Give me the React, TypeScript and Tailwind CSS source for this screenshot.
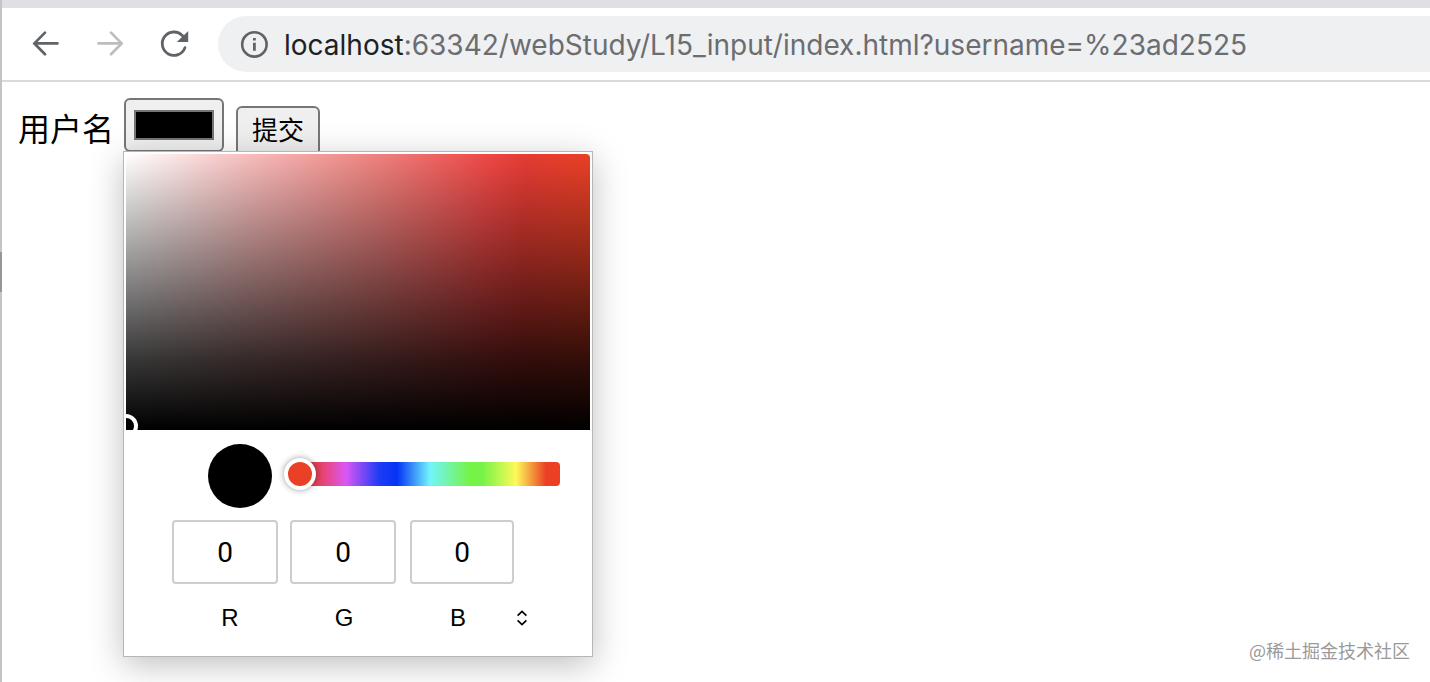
import { useState } from "react";

const channels = [
  { id: "red", name: "R", width: "w-[106px]" },
  { id: "green", name: "G", width: "w-[106px] ml-3" },
  { id: "blue", name: "B", width: "w-[104px] ml-3.5" },
];

function ArrowIcon({ flip = false }: { flip?: boolean }) {
  return (
    <svg
      viewBox="0 0 32 32"
      className={`w-8 h-8 ${flip ? "-scale-x-100" : ""}`}
      fill="none"
      stroke="currentColor"
      strokeWidth="2.7"
      strokeLinecap="round"
      strokeLinejoin="miter"
    >
      <path d="M27.4 15.4H5" />
      <path d="M15 4.6L4.4 15.4 15 26.2" />
    </svg>
  );
}

function ReloadIcon() {
  return (
    <svg viewBox="0 0 32 32" className="w-8 h-8" fill="none">
      <path
        d="M24.6 7.8A11.7 11.7 0 1 0 27 19.6"
        stroke="currentColor"
        strokeWidth="2.8"
        strokeLinecap="round"
      />
      <path d="M30.2 3v11H18.8z" fill="currentColor" />
    </svg>
  );
}

function InfoIcon() {
  return (
    <svg viewBox="0 0 28 28" className="w-7 h-7" fill="none">
      <circle cx="14.4" cy="14.4" r="12.2" stroke="currentColor" strokeWidth="2.6" />
      <path d="M13 8h2.8v2.6H13zM13 12.8h2.8v8H13z" fill="currentColor" />
    </svg>
  );
}

function Toolbar() {
  return (
    <header className="flex items-center h-[74px] border-b-2 border-[#dadada] pl-7 text-[#5f6368]">
      <button type="button" aria-label="Back" className="shrink-0">
        <ArrowIcon />
      </button>
      <button type="button" aria-label="Forward" className="shrink-0 ml-8 text-[#bdbdbd]">
        <ArrowIcon flip />
      </button>
      <button type="button" aria-label="Reload" className="shrink-0 ml-8">
        <ReloadIcon />
      </button>
      <div className="flex items-center flex-1 min-w-0 h-14 ml-7 pl-[22px] rounded-l-full bg-[#eff0f2]">
        <InfoIcon />
        <p className="ml-4 pt-0.5 whitespace-nowrap text-[28px] leading-8 font-['Inter',sans-serif] text-[#6b6d70]">
          <span className="text-[#202124]">localhost</span>
          :63342/webStudy/L15_input/index.html?username=%23ad2525
        </p>
      </div>
    </header>
  );
}

function ColorPopup() {
  const [rgb, setRgb] = useState<Record<string, string>>({ red: "0", green: "0", blue: "0" });

  return (
    <div className="absolute z-10 top-[53px] -left-px w-[470px] p-0.5 pb-5 bg-white border border-[#b4b7b6] font-['Liberation_Sans',sans-serif] text-black shadow-[0_8px_32px_rgba(0,0,0,0.25)]">
      <div className="relative h-[276px] overflow-hidden rounded-t bg-[linear-gradient(to_top,#000_0%,rgba(0,0,0,0.79)_25%,rgba(0,0,0,0.52)_50%,transparent_100%),linear-gradient(to_right,#fff_0%,#f7bcbb_27%,#ee827f_54%,#ee4846_78%,#e63c33_86%,#ea4025_100%)]">
        <span className="absolute -left-3 -bottom-2 w-6 h-6 rounded-full border-4 border-white bg-black" />
      </div>

      <div className="flex items-center pt-3.5 pl-[82px] pr-[30px]">
        <span className="w-16 h-16 shrink-0 rounded-full bg-black" />
        <input
          type="range"
          min="0"
          max="360"
          defaultValue="0"
          aria-label="Hue"
          className="flex-1 min-w-0 ml-3 mb-1 h-8 appearance-none bg-transparent [&::-webkit-slider-runnable-track]:h-6 [&::-webkit-slider-runnable-track]:rounded [&::-webkit-slider-runnable-track]:bg-[linear-gradient(to_right,transparent_12px,#e83f2f_12px,#e0405a_34px,#e8488f_44px,#d957f5_62px,#1f3cf5_95px,#0433f5_113px,#72f5fc_146px,#75f346_186px,#75f346_198px,#fdfa58_232px,#eb4025_262px)] [&::-webkit-slider-thumb]:appearance-none [&::-webkit-slider-thumb]:w-8 [&::-webkit-slider-thumb]:h-8 [&::-webkit-slider-thumb]:-mt-1 [&::-webkit-slider-thumb]:rounded-full [&::-webkit-slider-thumb]:border-4 [&::-webkit-slider-thumb]:border-white [&::-webkit-slider-thumb]:bg-[#ea4025] [&::-webkit-slider-thumb]:shadow-[0_0_6px_rgba(0,0,0,0.4)]"
        />
      </div>

      <div className="flex mt-3 pl-[46px]">
        {channels.map((c) => (
          <input
            key={c.id}
            id={c.id}
            type="text"
            value={rgb[c.id]}
            onChange={(e) => setRgb({ ...rgb, [c.id]: e.target.value })}
            className={`${c.width} h-16 border-2 border-[#cdcdcd] rounded bg-white text-center text-[28px] font-['Roboto',sans-serif]`}
          />
        ))}
      </div>

      <div className="flex items-center mt-4 pl-[47px] text-2xl leading-9">
        {channels.map((c) => (
          <label key={c.id} htmlFor={c.id} className="w-[114px] text-center">
            {c.name}
          </label>
        ))}
        <button type="button" aria-label="Change format">
          <svg viewBox="0 0 14 18" className="w-3.5 h-[18px]" fill="none" stroke="currentColor" strokeWidth="1.7">
            <path d="M2.6 6.6L7 2.4l4.4 4.2M2.6 11.4L7 15.6l4.4-4.2" />
          </svg>
        </button>
      </div>
    </div>
  );
}

export default function App() {
  const [color, setColor] = useState("#000000");

  return (
    <div className="relative flex min-h-screen overflow-hidden bg-white">
      <div className="w-0.5 shrink-0 bg-[#c4c4c4]">
        <div className="h-10 mt-[252px] bg-[#969696]" />
      </div>
      <div className="flex-1 min-w-0">
        <div className="h-2 bg-[#dfe0e5]" />
        <Toolbar />
        <form
          onSubmit={(e) => e.preventDefault()}
          className="flex items-start pt-4 pl-4 font-['Liberation_Sans','Noto_Sans_CJK_SC',sans-serif] text-black"
        >
          <label htmlFor="username" className="pt-2 text-[32px] leading-[48px]">
            用户名
          </label>
          <div className="relative ml-2.5">
            <input
              id="username"
              name="username"
              type="color"
              value={color}
              onChange={(e) => setColor(e.target.value)}
              className="block w-[100px] h-[54px] px-2 py-2.5 appearance-none border-2 border-[#767676] rounded-md bg-[#efefef] [&::-webkit-color-swatch-wrapper]:p-0 [&::-webkit-color-swatch]:border-2 [&::-webkit-color-swatch]:border-[#767676] [&::-webkit-color-swatch]:rounded-none"
            />
            <ColorPopup />
          </div>
          <button
            type="submit"
            className="ml-3 mt-2 w-[84px] h-[50px] border-2 border-[#767676] rounded-md bg-[#efefef] text-[26px] leading-none"
          >
            提交
          </button>
        </form>
      </div>
      <p className="absolute right-5 bottom-[18px] text-lg leading-7 text-[#9a9a9a] font-['Noto_Sans_CJK_SC',sans-serif]">
        @稀土掘金技术社区
      </p>
    </div>
  );
}
